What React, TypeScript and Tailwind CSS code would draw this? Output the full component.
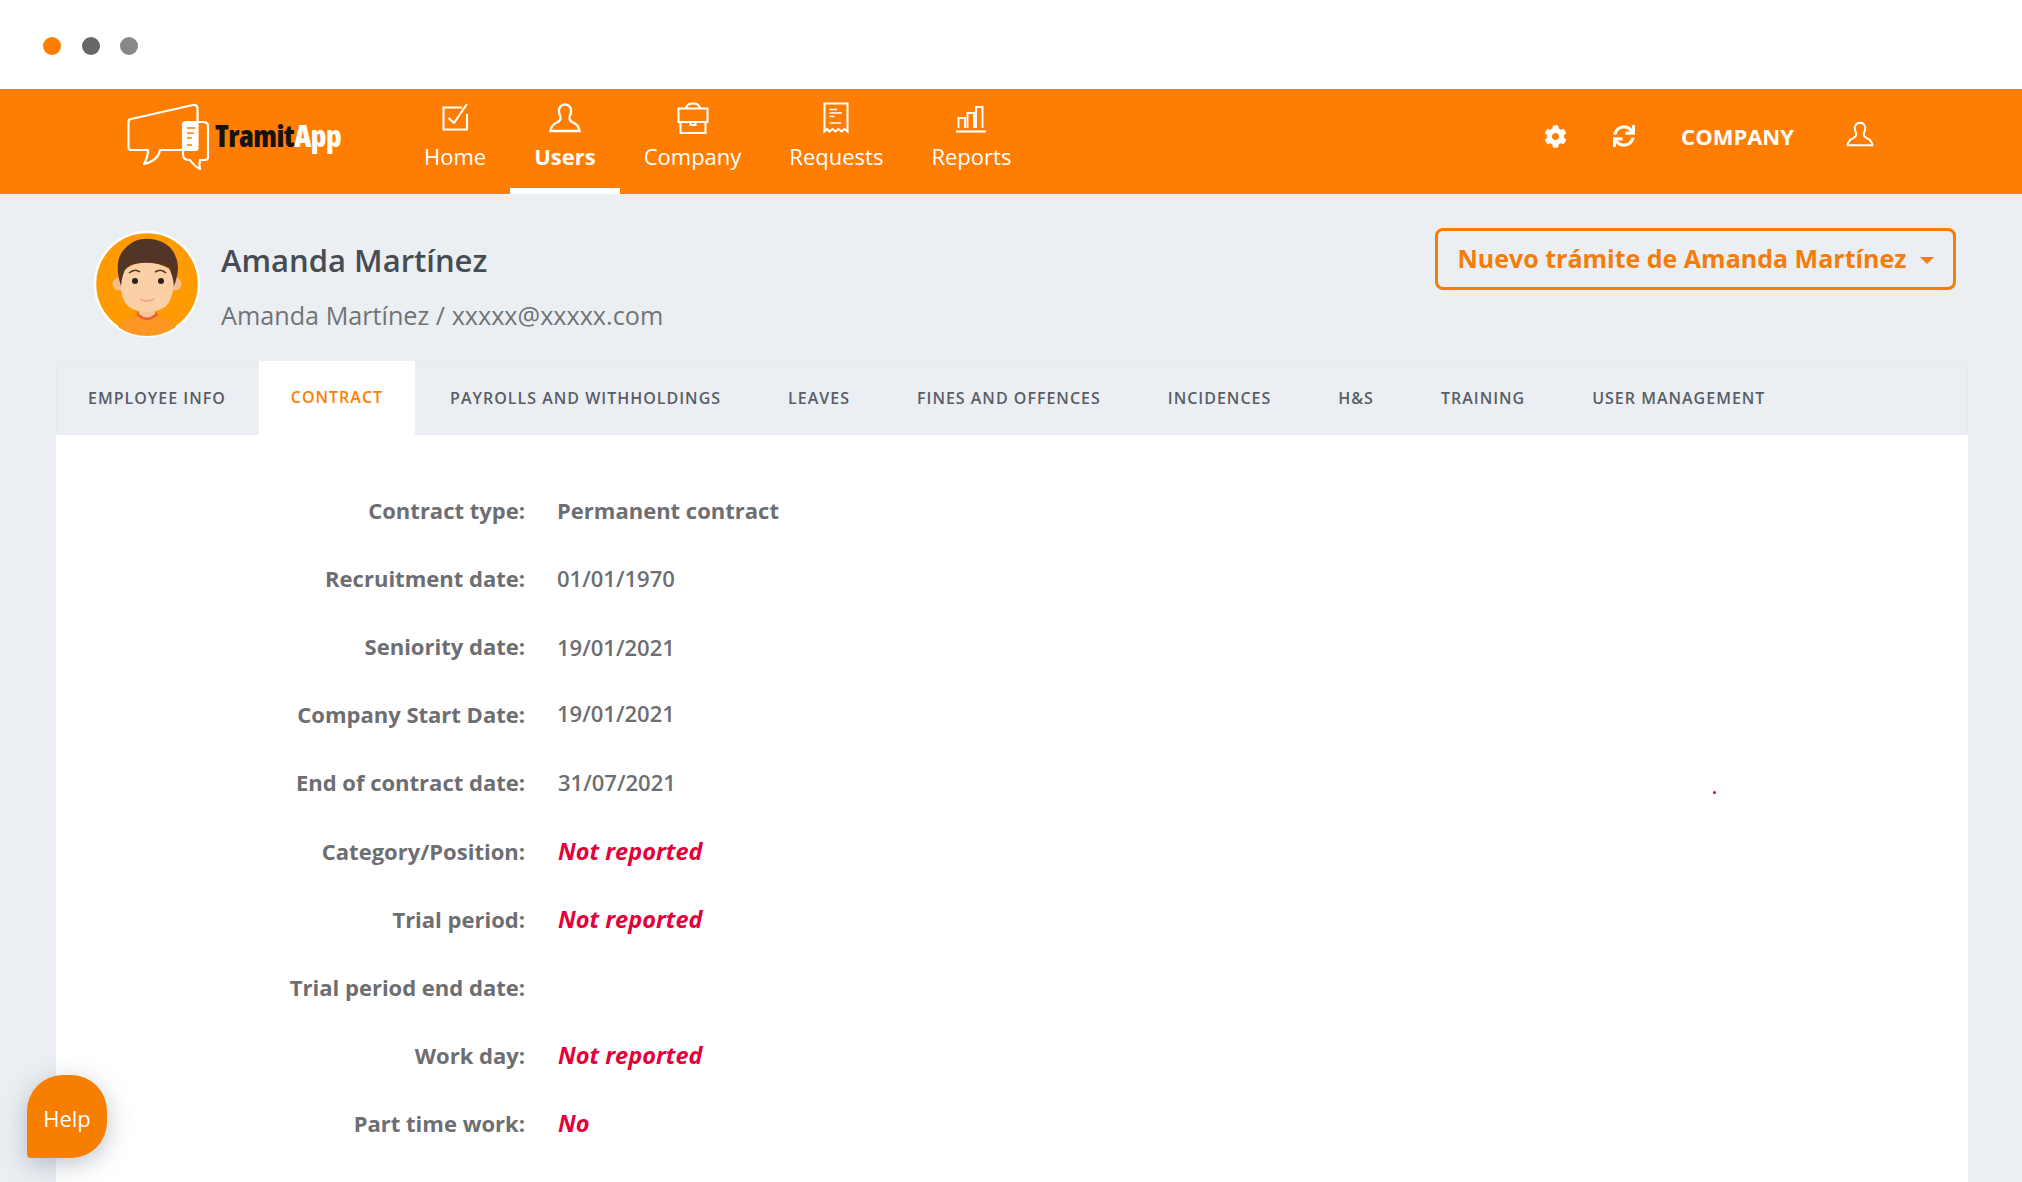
import { FaCog, FaSync } from "react-icons/fa";

const navItems = [
  { label: "Home", icon: <HomeIcon /> },
  { label: "Users", icon: <UserIcon />, active: true },
  { label: "Company", icon: <CaseIcon /> },
  { label: "Requests", icon: <ReceiptIcon /> },
  { label: "Reports", icon: <BarsIcon /> },
];

const tabs = [
  "Employee info",
  "Contract",
  "Payrolls and withholdings",
  "Leaves",
  "Fines and offences",
  "Incidences",
  "H&S",
  "Training",
  "User management",
];

const missing = "text-[23.5px] font-bold italic text-[#e4003a] ml-[1px] translate-y-[1px]";

const rows = [
  { label: "Contract type:", value: "Permanent contract", valueClass: "font-bold" },
  { label: "Recruitment date:", value: "01/01/1970" },
  { label: "Seniority date:", value: "19/01/2021", valueClass: "translate-y-[1px]" },
  { label: "Company Start Date:", value: "19/01/2021", valueClass: "-translate-y-[1px]" },
  { label: "End of contract date:", value: "31/07/2021", valueClass: "ml-[1px]" },
  { label: "Category/Position:", value: "Not reported", valueClass: missing },
  { label: "Trial period:", value: "Not reported", valueClass: missing },
  { label: "Trial period end date:", value: "" },
  { label: "Work day:", value: "Not reported", valueClass: missing },
  { label: "Part time work:", value: "No", valueClass: missing },
  { label: "Time (hours):", value: "40.00", valueClass: "-translate-y-[2px]", labelClass: "-translate-y-[2px]" },
];

function HomeIcon() {
  return (
    <svg viewBox="0 0 40 36" className="h-[36px] w-[40px]" fill="none" stroke="white" strokeWidth="2.1">
      <path d="M27 5.500H8.500V27.500H32V12" />
      <path d="M13.500 16L19 21L32 2" />
    </svg>
  );
}

function UserIcon({ className = "h-[36px] w-[40px]" }: { className?: string }) {
  return (
    <svg viewBox="0 0 40 36" className={className} fill="none" stroke="white" strokeWidth="2.300">
      <path d="M20 2.500C15.500 2.500 13.500 6 14 10C14.300 12.500 15 13 15.500 15C16 17.500 15 19 12 20.500C8 22 6 24.500 5.500 29H34.500C34 24.500 32 22 28 20.500C25 19 24 17.500 24.500 15C25 13 25.700 12.500 26 10C26.500 6 24.500 2.500 20 2.500Z" />
    </svg>
  );
}

function CaseIcon() {
  return (
    <svg viewBox="0 0 40 36" className="h-[36px] w-[40px]" fill="none" stroke="white" strokeWidth="2.100">
      <path d="M5.500 6.500H34.500V20H5.500Z" />
      <path d="M7.500 20V31H32.500V20" />
      <path d="M13 6.500C13.500 3 16 1.500 20 1.500C24 1.500 26.500 3 27 6.500" />
      <path d="M17.500 20V23H22.500V20" />
    </svg>
  );
}

function ReceiptIcon() {
  return (
    <svg viewBox="0 0 40 36" className="h-[36px] w-[40px]" fill="none" stroke="white" strokeWidth="2.100">
      <path d="M8.500 1.500H31.500V29.500L28.500 27L25.500 29.500L22.500 27L19.500 29.500L16.500 27L13.500 29.500L11 27L8.500 29.500Z" />
      <path d="M13.500 7.500H21M13.500 11H26M13.500 14.500H18.500M13.500 21H25" strokeWidth="1.700" />
    </svg>
  );
}

function BarsIcon() {
  return (
    <svg viewBox="0 0 40 36" className="h-[36px] w-[40px]" fill="none" stroke="white" strokeWidth="1.900">
      <path d="M5 29.500H35" strokeWidth="2.200" />
      <path d="M7.500 26V16H14V26" />
      <path d="M16.500 26V11H23V26" />
      <path d="M25 26V5H31.500V26" />
    </svg>
  );
}

function Logo() {
  return (
    <svg viewBox="0 0 90 85" className="h-[85px] w-[90px]" fill="none" stroke="white" strokeWidth="2.200" strokeLinejoin="round">
      <path d="M65 55H40Q38 66 24 69Q28 62 28 55H11Q8.500 55 8.500 52V27Q8.500 24.500 11 24L73 10Q77 9.500 77.500 13V27" />
      <path d="M77 27H83Q88 27 88 31V62Q88 65 85 65H80Q79 70 80 74Q74 71 70 65Q63 65 63 60V55" />
      <path d="M66 27H77.500V53Q77.500 55 75 55H63V30Q63 27 66 27Z" fill="white" />
      <path d="M67 33H75M67 38H74M67 43H72M67 50H72" stroke="#ff7d00" strokeWidth="1.600" />
    </svg>
  );
}

function Avatar() {
  return (
    <svg viewBox="0 0 108 108" className="h-[108px] w-[108px]">
      <circle cx="54" cy="54" r="52" fill="#ff9a00" stroke="white" strokeWidth="2.500" />
      <path d="M25 97Q32 88 46 85H62Q76 88 83 97Q70 106 54 106Q38 106 25 97Z" fill="#fb9722" />
      <path d="M43 85Q54 95 65 85L63 82H45Z" fill="#e8622a" />
      <path d="M46 74H62V84Q54 91 46 84Z" fill="#f8c69a" />
      <circle cx="26" cy="54" r="6.500" fill="#f6bd90" />
      <circle cx="82" cy="54" r="6.500" fill="#f6bd90" />
      <path d="M28 42Q54 22 80 42V56Q80 82 54 82Q28 82 28 56Z" fill="#fcd0a6" />
      <path d="M28 56Q21 34 29 22Q40 7 58 9Q82 12 85 36Q85 46 81 56Q80 46 76 38Q64 32 48 33Q36 34 32 40Q29 46 28 56Z" fill="#523527" />
      <path d="M36 43Q42 38 47 42M62 42Q68 38 73 43" fill="none" stroke="#523527" strokeWidth="1.600" />
      <circle cx="42" cy="51" r="3" fill="#2b211d" />
      <circle cx="68" cy="51" r="3" fill="#2b211d" />
      <path d="M47 69Q54 73 61 69" fill="none" stroke="#f0a184" strokeWidth="1.600" />
    </svg>
  );
}

export default function App() {
  return (
    <div className="relative h-[1182px] w-[2022px] overflow-hidden bg-[#ebeff3] font-['Open_Sans',sans-serif] text-[#6d6e71]">
      <div className="flex h-[89px] items-center gap-[20.5px] bg-white pl-[43px] pt-[3px]">
        <span className="h-[18px] w-[18px] rounded-full bg-[#ff7e00]" />
        <span className="h-[18px] w-[18px] rounded-full bg-[#666666]" />
        <span className="h-[18px] w-[18px] rounded-full bg-[#888888]" />
      </div>

      <header className="flex h-[105px] bg-[#ff7d00] text-white">
        <div className="flex w-[400px] pl-[120px] pt-[6px]">
          <Logo />
          <span className="ml-[5px] mt-[21px] text-[30px] font-extrabold leading-[40px] tracking-[-.5px] [font-stretch:75%]">
            <span className="text-[#16120e]">Tramit</span>App
          </span>
        </div>
        <nav className="flex">
          {navItems.map((item) => (
            <a
              key={item.label}
              className={
                item.active
                  ? "flex flex-col items-center border-b-[6px] border-white px-[24px] pt-[13px] text-[22px] font-bold leading-[36px]"
                  : "flex flex-col items-center px-[24px] pt-[13px] text-[22px] leading-[36px]"
              }
            >
              {item.icon}
              {item.label}
            </a>
          ))}
        </nav>
        <div className="ml-auto flex h-[94px] items-center gap-[46px] pr-[142px]">
          <FaCog className="h-[23px] w-[23px]" />
          <FaSync className="h-[22px] w-[22px]" />
          <span className="text-[22px] font-bold">COMPANY</span>
          <UserIcon className="h-[36px] w-[40px] scale-[.85]" />
        </div>
      </header>

      <section className="flex h-[167px] items-start pl-[93px] pr-[66px]">
        <div className="mt-[36px]">
          <Avatar />
        </div>
        <div className="ml-[20px] mt-[42px]">
          <h1 className="text-[31px] font-semibold leading-[48px] text-[#474c52]">Amanda Martínez</h1>
          <p className="mt-[13px] text-[25.2px] leading-[36px] text-[#717376]">Amanda Martínez / xxxxx@xxxxx.com</p>
        </div>
        <button className="ml-auto mt-[34px] flex h-[62px] w-[521px] items-center justify-center gap-[13px] rounded-[8px] border-[3px] border-[#f67c08] text-[25px] font-bold text-[#f67c08]">
          Nuevo trámite de Amanda Martínez
          <svg viewBox="0 0 14 7" className="mt-[2px] h-[7px] w-[14px]" fill="#f67c08">
            <path d="M0 0H14L7 7Z" />
          </svg>
        </button>
      </section>

      <div className="ml-[56px] mr-[54px] flex h-[74px] gap-[3px] border-t border-[#e6e9ee] shadow-[inset_1px_0_#e6e9ee,inset_-1px_0_#e6e9ee]">
        {tabs.map((tab) => (
          <div
            key={tab}
            className={
              tab === "Contract"
                ? "-mt-px flex items-center bg-white px-[32px] pb-[2px] text-[16px] font-semibold uppercase tracking-[1px] text-[#ff7e00]"
                : "flex items-center px-[32px] pb-[2px] text-[16px] font-semibold uppercase tracking-[1px] text-[#595d66] first:pr-[30px]"
            }
          >
            {tab}
          </div>
        ))}
      </div>

      <main className="relative ml-[56px] mr-[54px] h-[750px] bg-white pt-[41px]">
        {rows.map((row) => (
          <div
            key={row.label}
            className={
              row.label === "End of contract date:"
                ? "grid h-[69px] grid-cols-[469px_1fr] items-center gap-[32px] text-[22px] font-semibold"
                : "grid h-[68px] grid-cols-[469px_1fr] items-center gap-[32px] text-[22px] font-semibold"
            }
          >
            <div className={`text-right font-bold ${row.labelClass ?? ""}`}>{row.label}</div>
            <div className={row.valueClass ?? ""}>{row.value}</div>
          </div>
        ))}
        <span className="absolute left-[1657px] top-[356px] h-[3px] w-[3px] rounded-full bg-[#e4003a]" />
      </main>

      <button className="absolute bottom-[24px] left-[27px] h-[83px] w-[80px] rounded-[36px] rounded-bl-[4px] bg-[#f77f00] pt-[3px] text-[22px] text-white shadow-[0_6px_24px_rgba(70,90,110,0.35)]">
        Help
      </button>
    </div>
  );
}
